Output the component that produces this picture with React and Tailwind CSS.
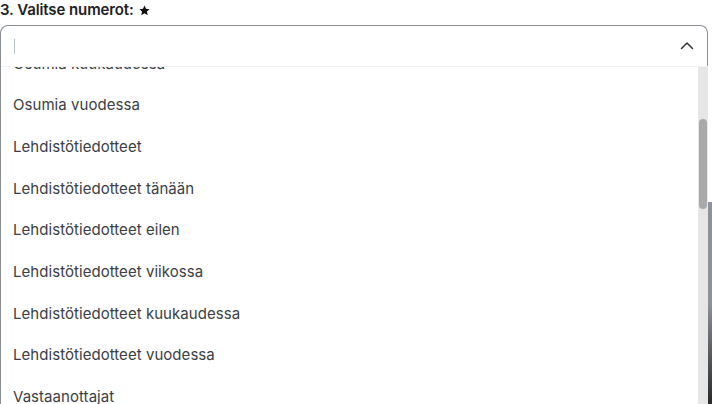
import React from "react";

const options = [
  "Osumia kuukaudessa",
  "Osumia vuodessa",
  "Lehdistötiedotteet",
  "Lehdistötiedotteet tänään",
  "Lehdistötiedotteet eilen",
  "Lehdistötiedotteet viikossa",
  "Lehdistötiedotteet kuukaudessa",
  "Lehdistötiedotteet vuodessa",
  "Vastaanottajat",
];

const Star = () => (
  <svg width="11" height="11" viewBox="0 0 24 24" className="mt-[1px]">
    <path
      d="M12 1l3.3 7.2 7.9.8-5.9 5.3 1.7 7.8L12 18.1l-7 4 1.7-7.8L.8 9l7.9-.8z"
      fill="#111"
    />
  </svg>
);

const ChevronUp = () => (
  <svg width="14" height="14" viewBox="0 0 14 14" fill="none">
    <path d="M1.5 9.5L7 4l5.5 5.5" stroke="#30343b" strokeWidth="1.5" strokeLinecap="round" strokeLinejoin="round" />
  </svg>
);

export default function App() {
  return (
    <div className="w-[712px] h-[404px] overflow-hidden bg-white font-['Inter',sans-serif]">
      {/* label */}
      <div className="flex items-center gap-[5px] h-[20px] text-[15px] leading-[20px] font-semibold text-[#1d2126]">
        <span className="tracking-[-0.1px]">3. Valitse numerot:</span>
        <Star />
      </div>

      <div className="flex mt-[5px] items-start">
        {/* select box */}
        <div className="w-[708px] h-[379px] border-t border-x border-[#8b9097] rounded-t-[8px] flex flex-col">
          <div className="h-[40px] flex items-center justify-between pl-[13px] pr-[13px] shrink-0">
            <span className="w-[1px] h-[15px] bg-[#b9c0ca]" />
            <ChevronUp />
          </div>
          {/* dropdown list */}
          <div className="flex flex-1 min-h-0 -mr-[1px] border-t border-[#f1f1f1]">
            <div className="flex-1 overflow-hidden">
              <ul className="-mt-[24px]">
                {options.map((o) => (
                  <li
                    key={o}
                    className="h-[41.7px] flex items-center pl-[12px] text-[15px] tracking-[0.05px] text-[#3a3e45]"
                  >
                    {o}
                  </li>
                ))}
              </ul>
            </div>
            <div className="w-[10px] bg-[#e6e6e6] shrink-0">
              <div className="mt-[52px] mx-[1px] h-[90px] rounded-full bg-[#a9a9a9]" />
            </div>
          </div>
        </div>
        {/* element behind, peeking out */}
        <div className="w-[4px] h-[202px] mt-[177px] bg-gradient-to-b from-[#8d9299] via-[#8d9299] to-[#2a2a2a]" />
      </div>
    </div>
  );
}
